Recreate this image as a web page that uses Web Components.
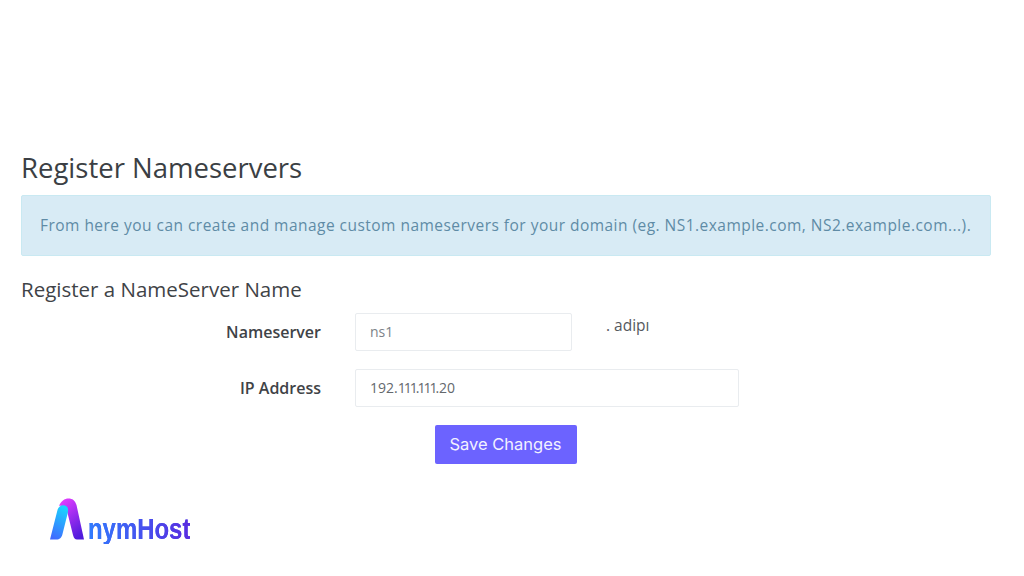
<!DOCTYPE html>
<html>
<head>
<meta charset="utf-8">
<title>Register Nameservers</title>
<style>
  html, body { margin: 0; padding: 0; background: #fff; }
  body { font-family: "Open Sans", sans-serif; }
  .tight { letter-spacing: -2px; }
</style>
</head>
<body>
<ns-page>
  <ns-title slot="title">Register Nameservers</ns-title>
  <ns-alert slot="alert">From here you can create and manage custom nameservers for your domain (eg. NS1.example.com, NS2.example.com...).</ns-alert>
  <ns-subtitle slot="subtitle">Register a NameServer Name</ns-subtitle>
  <ns-row slot="rows" label="Nameserver"><ns-field width="217" muted>ns1</ns-field><ns-suffix>. adipı</ns-suffix></ns-row>
  <ns-row slot="rows" label="IP Address"><ns-field width="384">192.<span class="tight">111.111</span>.20</ns-field></ns-row>
  <ns-button slot="button">Save Changes</ns-button>
  <ns-logo slot="logo"></ns-logo>
</ns-page>
<script>
function shadow(el, html) {
  el.attachShadow({ mode: 'open' }).innerHTML = html;
}

class NsPage extends HTMLElement {
  constructor() {
    super();
    shadow(this, `<style>
      :host { display: block; width: 1024px; height: 576px; overflow: hidden; box-sizing: border-box; padding: 152px 33px 0 21px; }
      .rows { display: flex; flex-direction: column; gap: 18px; margin-top: 11px; }
      .button { display: flex; justify-content: center; margin: 18px 0 0 -1px; }
      .logo { margin: 34px 0 0 29px; }
    </style>
    <slot name="title"></slot>
    <slot name="alert"></slot>
    <slot name="subtitle"></slot>
    <div class="rows"><slot name="rows"></slot></div>
    <div class="button"><slot name="button"></slot></div>
    <div class="logo"><slot name="logo"></slot></div>`);
  }
}

class NsTitle extends HTMLElement {
  constructor() {
    super();
    shadow(this, `<style>
      :host { display: block; font: 400 27.5px/32px "Open Sans", sans-serif; color: #3b3f44; margin-bottom: 11px; }
    </style><slot></slot>`);
  }
}

class NsAlert extends HTMLElement {
  constructor() {
    super();
    shadow(this, `<style>
      :host { display: flex; align-items: center; box-sizing: border-box; height: 61px; padding: 0 18px 2px;
        background: #d8ebf5; border: 1px solid #c9e9f2; border-radius: 2px;
        font: 400 15.5px/20px "Open Sans", sans-serif; letter-spacing: .47px; color: #5f8ba6; white-space: nowrap; }
    </style><slot></slot>`);
  }
}

class NsSubtitle extends HTMLElement {
  constructor() {
    super();
    shadow(this, `<style>
      :host { display: block; font: 400 20.5px/26px "Open Sans", sans-serif; color: #3f4347; margin-top: 20px; }
    </style><slot></slot>`);
  }
}

class NsRow extends HTMLElement {
  constructor() {
    super();
    shadow(this, `<style>
      :host { display: flex; align-items: flex-start; }
      .label { width: 300px; flex: none; text-align: right; font: 600 16px/38px "Open Sans", sans-serif; color: #3f4347; margin-right: 34px; }
    </style>
    <div class="label">${this.getAttribute('label')}</div><slot></slot>`);
  }
}

class NsField extends HTMLElement {
  constructor() {
    super();
    const muted = this.hasAttribute('muted');
    shadow(this, `<style>
      :host { display: block; box-sizing: border-box; width: ${this.getAttribute('width')}px; height: 38px; padding: 0 14px;
        background: #fff; border: 1px solid #e9ecef; border-radius: 2px;
        font: 400 14px/36px "Open Sans", sans-serif; color: ${muted ? '#7d8288' : '#64686d'}; }
    </style><slot></slot>`);
  }
}

class NsSuffix extends HTMLElement {
  constructor() {
    super();
    shadow(this, `<style>
      :host { display: block; width: 45px; margin-left: 34px; overflow: hidden; white-space: nowrap;
        font: 400 15.5px/24px "Open Sans", sans-serif; color: #55595e; }
    </style><slot></slot>`);
  }
}

class NsButton extends HTMLElement {
  constructor() {
    super();
    shadow(this, `<style>
      :host { display: block; box-sizing: border-box; width: 142px; height: 39px; text-align: center;
        background: #6c63ff; border-radius: 2px; color: #f2f1ff;
        font: 400 16.5px/38px Inter, sans-serif; }
    </style><slot></slot>`);
  }
}

class NsLogo extends HTMLElement {
  constructor() {
    super();
    shadow(this, `<style>
      :host { display: flex; align-items: flex-end; height: 44px; }
      svg { display: block; flex: none; }
      .name { flex: none; width: max-content; margin: 0 0 -2px 4px; transform: scaleX(.825); transform-origin: left bottom;
        font: 700 29px/29px "Liberation Sans", sans-serif; white-space: nowrap;
        background: linear-gradient(90deg, #2f7dff, #5a2be0); -webkit-background-clip: text; background-clip: text;
        color: transparent; filter: drop-shadow(.9px 0 0 #4a55ea); }
    </style>
    <svg width="34" height="44" viewBox="0 0 34 44">
      <defs>
        <linearGradient id="a" x1="0.6" y1="0" x2="0.3" y2="1"><stop offset="0" stop-color="#19d4ff"/><stop offset="1" stop-color="#3f6bff"/></linearGradient>
        <linearGradient id="b" x1="0.2" y1="0" x2="0.7" y2="1"><stop offset="0" stop-color="#e23dff"/><stop offset="1" stop-color="#4f1bdc"/></linearGradient>
      </defs>
      <path fill="url(#b)" d="M9 8 C11 3 14.5 .5 18.5 .5 C22.5 .5 25 2.5 26.5 7 L34 41.5 L27 41.5 C25 41.5 24 40.5 23 37 L17.5 15 C16.5 11 13 7 9 8 Z"/>
      <path fill="url(#a)" d="M0 41.5 L7.5 12 C8.5 8 12 6.5 15 7.5 C18.5 8.5 18.5 12 17.5 16 L12.5 36 C11.5 40 9.5 41.5 6.5 41.5 Z"/>
    </svg>
    <div class="name">nymHost</div>`);
  }
}

customElements.define('ns-page', NsPage);
customElements.define('ns-title', NsTitle);
customElements.define('ns-alert', NsAlert);
customElements.define('ns-subtitle', NsSubtitle);
customElements.define('ns-row', NsRow);
customElements.define('ns-field', NsField);
customElements.define('ns-suffix', NsSuffix);
customElements.define('ns-button', NsButton);
customElements.define('ns-logo', NsLogo);
</script>
</body>
</html>
